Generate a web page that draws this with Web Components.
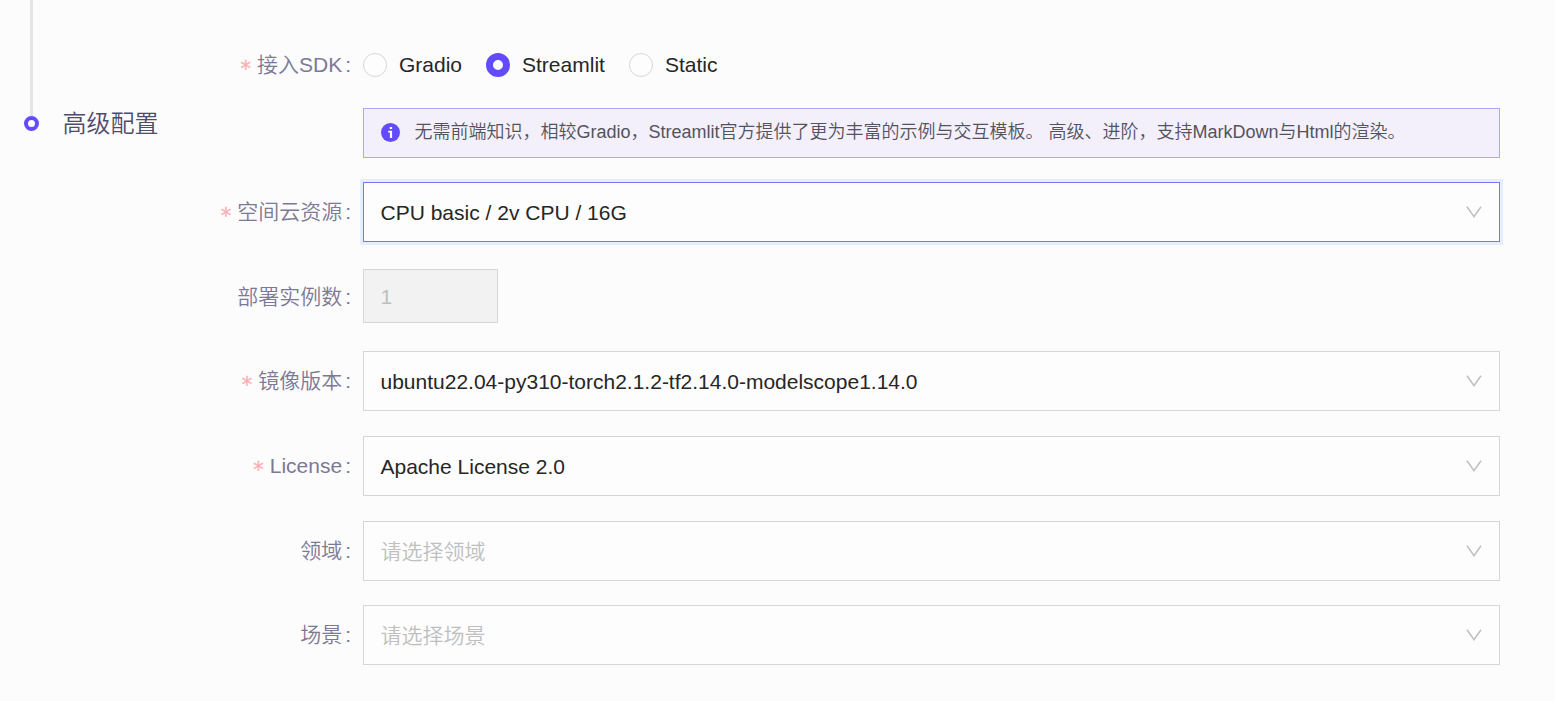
<!DOCTYPE html>
<html lang="zh-CN">
<head>
<meta charset="utf-8">
<title>高级配置</title>
<style>
html,body{margin:0;height:100%;overflow:hidden;background:#fcfcfc}
body{font-family:"Liberation Sans","Noto Sans CJK SC",sans-serif;font-size:21px;font-weight:350;line-height:33px;color:#262626}
</style>
</head>
<body>
<settings-page>
  <step-title slot="step">高级配置</step-title>
  <form-row label="接入SDK" required style="--h:33px;--gap:27px;--shift:0px">
    <radio-option>Gradio</radio-option>
    <radio-option checked>Streamlit</radio-option>
    <radio-option>Static</radio-option>
  </form-row>
  <info-alert>无需前端知识，相较Gradio，Streamlit官方提供了更为丰富的示例与交互模板。 高级、进阶，支持MarkDown与Html的渲染。</info-alert>
  <form-row label="空间云资源" required style="--gap:27px"><select-box focused>CPU basic / 2v CPU / 16G</select-box></form-row>
  <form-row label="部署实例数" style="--h:54px;--gap:28px;--shift:0px"><number-box>1</number-box></form-row>
  <form-row label="镜像版本" required><select-box>ubuntu22.04-py310-torch2.1.2-tf2.14.0-modelscope1.14.0</select-box></form-row>
  <form-row label="License" required><select-box>Apache License 2.0</select-box></form-row>
  <form-row label="领域" style="--gap:24px"><select-box empty>请选择领域</select-box></form-row>
  <form-row label="场景"><select-box empty>请选择场景</select-box></form-row>
</settings-page>
<script>
const define = (name, html, setup) => customElements.define(name, class extends HTMLElement {
  connectedCallback() {
    if (this.shadowRoot) return;
    const t = document.createElement('template');
    t.innerHTML = html;
    const root = this.attachShadow({mode: 'open'});
    root.append(t.content.cloneNode(true));
    if (setup) setup(this, root);
  }
});

define('settings-page', `
<style>
:host{display:grid;grid-template-columns:210px 1290px;height:100vh}
main{padding-top:48px}
</style>
<aside><slot name="step"></slot></aside><main><slot></slot></main>`);

define('step-title', `
<style>
:host{display:flex;padding-left:24px;gap:23.5px;font-size:24px;line-height:36px;color:#504b6d}
.rail{display:flex;flex-direction:column;align-items:center;width:15px}
.line{width:3px;height:116px;background:#e5e5e5}
.dot{box-sizing:border-box;width:15px;height:15px;border:4px solid #624aff;border-radius:50%;background:#fff}
.text{padding-top:106px}
</style>
<div class="rail"><div class="line"></div><div class="dot"></div></div>
<div class="text"><slot></slot></div>`);

define('form-row', `
<style>
:host{display:grid;grid-template-columns:153px 1fr;height:var(--h,60px);align-items:center;margin-bottom:var(--gap,25px)}
.label{display:flex;justify-content:flex-end;color:#7c7995;white-space:nowrap;transform:translateY(var(--shift,-1px))}
.star{font-family:"DejaVu Sans",sans-serif;font-weight:400;color:#ffadb3;-webkit-text-stroke:.3px #ffadb3;width:10.5px;margin-right:6px;padding-top:5px;height:28px}
.colon{margin:0 12px 0 3px}
.control{display:flex;gap:24px}
</style>
<div class="label"><span class="name"></span><span class="colon">:</span></div>
<div class="control"><slot></slot></div>`, (el, root) => {
  root.querySelector('.name').textContent = el.getAttribute('label');
  if (el.hasAttribute('required')) {
    const s = document.createElement('span');
    s.className = 'star';
    s.textContent = '*';
    root.querySelector('.label').prepend(s);
  }
});

define('radio-option', `
<style>
:host{display:flex;align-items:center;gap:12px}
i{box-sizing:border-box;width:24px;height:24px;border:1px solid #d6d6d6;border-radius:50%;background:#fdfdfd}
:host([checked]) i{border:7.5px solid #624aff}
</style>
<i></i><span><slot></slot></span>`);

define('info-alert', `
<style>
:host{box-sizing:border-box;display:flex;align-items:center;height:50px;margin:0 0 24px 153px;padding:0 17px;gap:14.5px;border:1px solid #b1a4fb;background:#f3f0fc;font-size:18px;line-height:28px;color:#53535e;white-space:nowrap}
svg{display:block;width:19px;height:19px;margin-top:-2px}
span{margin-top:-2px}
</style>
<svg viewBox="0 0 19 19"><circle cx="9.5" cy="9.5" r="9.5" fill="#624aff"/><path d="M8.7 4h2.4v2H8.7zM7.2 7.8h3.9v7.2H8.9V9.5H7.2z" fill="#fff"/></svg>
<span><slot></slot></span>`);

define('select-box', `
<style>
:host{box-sizing:border-box;display:flex;flex:1;align-items:center;justify-content:space-between;height:60px;padding:0 17px 0 16.5px;border:1px solid #d6d6d6;background:#fdfdfd}
:host([focused]){border-color:#8470f5;box-shadow:0 0 0 3px #e3effc}
:host([empty]){color:#bfbfbf}
svg{width:16px;height:12px;margin-top:-1px}
</style>
<span><slot></slot></span>
<svg viewBox="0 0 16 12"><path d="M1 .8 8 10.6 15 .8" fill="none" stroke="#bfbfbf" stroke-width="1.5"/></svg>`);

define('number-box', `
<style>
:host{box-sizing:border-box;display:flex;align-items:center;width:135px;height:54px;padding:0 16.5px;border:1px solid #d6d6d6;background:#f2f2f2;color:#bfbfbf}
</style>
<span><slot></slot></span>`);
</script>
</body>
</html>
